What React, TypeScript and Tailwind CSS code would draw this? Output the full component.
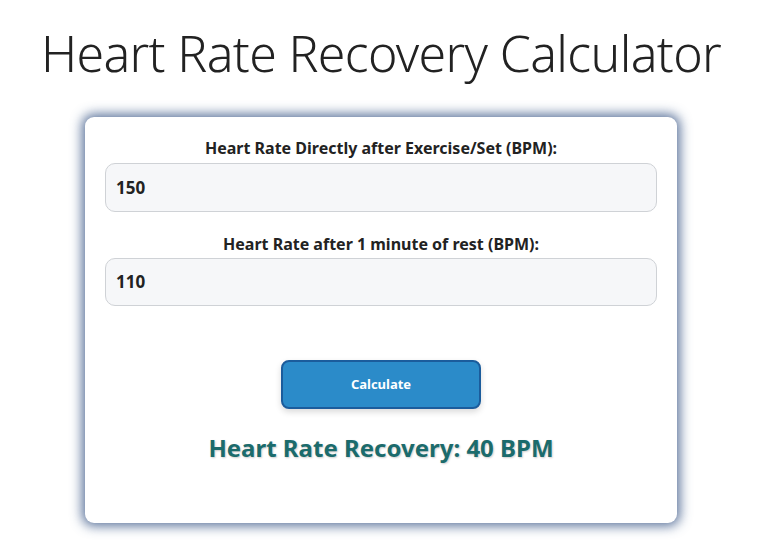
import React from "react";

export default function App() {
  return (
    <div className="min-h-screen bg-white flex flex-col items-center pr-[7px] font-['Noto_Sans','Open_Sans',sans-serif]">
      <h1 className="mt-[21px] text-[50px] leading-[64px] font-[350] tracking-[-0.65px] text-[#222]">
        Heart Rate Recovery Calculator
      </h1>
      <div className="mt-[32px] w-[592px] h-[406px] rounded-[9px] bg-white px-5 pt-[20px] shadow-[0_0_12px_3px_rgba(50,80,130,0.8)]">
        <label className="block text-center text-[16px] leading-[22px] font-bold text-[#222]">
          Heart Rate Directly after Exercise/Set (BPM):
        </label>
        <div className="mt-[4px] h-[49px] rounded-[10px] border border-[#cfd2d6] bg-[#f6f7f9] px-[10px] flex items-center text-[17px] font-bold text-[#222]">
          150
        </div>
        <label className="mt-[21px] block text-center text-[16px] leading-[22px] font-bold text-[#222]">
          Heart Rate after 1 minute of rest (BPM):
        </label>
        <div className="mt-[3px] h-[48px] rounded-[10px] border border-[#cfd2d6] bg-[#f6f7f9] px-[10px] flex items-center text-[17px] font-bold text-[#222]">
          110
        </div>
        <div className="mt-[54px] flex justify-center">
          <button className="w-[200px] h-[49px] rounded-[8px] border-2 border-[#1b5c9c] bg-[#2b8bc9] text-white text-[13px] font-bold shadow-[0_3px_6px_rgba(0,0,0,0.15)]">
            Calculate
          </button>
        </div>
        <div className="mt-[23px] text-center text-[24px] leading-[32px] font-bold text-[#1b6b6c] [text-shadow:1px_1px_2px_rgba(0,0,0,0.2)]">
          Heart Rate Recovery: 40 BPM
        </div>
      </div>
    </div>
  );
}
